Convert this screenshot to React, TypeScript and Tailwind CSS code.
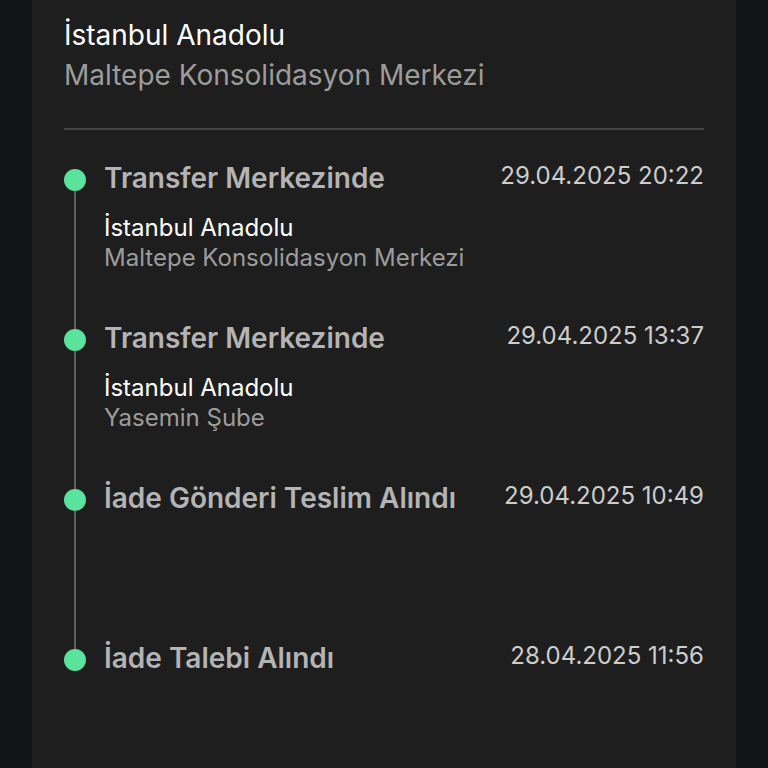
import React from 'react';

const events = [
    {
        title: 'Transfer Merkezinde',
        date: '29.04.2025 20:22',
        city: 'İstanbul Anadolu',
        place: 'Maltepe Konsolidasyon Merkezi',
    },
    {
        title: 'Transfer Merkezinde',
        date: '29.04.2025 13:37',
        city: 'İstanbul Anadolu',
        place: 'Yasemin Şube',
    },
    { title: 'İade Gönderi Teslim Alındı', date: '29.04.2025 10:49' },
    { title: 'İade Talebi Alındı', date: '28.04.2025 11:56' },
];

export default function App() {
    return (
        <div className="min-h-screen bg-[#131416] flex justify-center font-['Inter',sans-serif]">
            <div className="w-[704px] min-h-[768px] bg-[#1e1e1e] px-8 pt-[15px]">
                {/* Current location */}
                <div className="text-[28px] leading-[40px]">
                    <div className="text-white">İstanbul Anadolu</div>
                    <div className="text-[#9c9c9c]">Maltepe Konsolidasyon Merkezi</div>
                </div>

                <div className="mt-[33px] h-[2px] bg-[#444]" />

                {/* Timeline */}
                <div className="relative pt-[30px]">
                    <div className="absolute left-[10px] top-[50px] h-[480px] w-[2px] bg-[#5e5e5e]" />
                    {events.map((ev, i) => (
                        <div key={i} className="relative flex h-[160px] items-start">
                            <div className="mt-[9px] h-[22px] w-[22px] shrink-0 rounded-full bg-[#5ae39f]" />
                            <div className="ml-[18px] flex-1">
                                <div className="flex items-start justify-between">
                                    <span className="text-[28px] leading-[36px] font-semibold text-[#b4b4b4]">
                                        {ev.title}
                                    </span>
                                    <span className="text-[24px] leading-[32px] text-[#cdcdcd]">{ev.date}</span>
                                </div>
                                {ev.city && (
                                    <div className="mt-[17px] text-[24px] leading-[30px]">
                                        <div className="text-white">{ev.city}</div>
                                        <div className="text-[#9c9c9c]">{ev.place}</div>
                                    </div>
                                )}
                            </div>
                        </div>
                    ))}
                </div>
            </div>
        </div>
    );
}
